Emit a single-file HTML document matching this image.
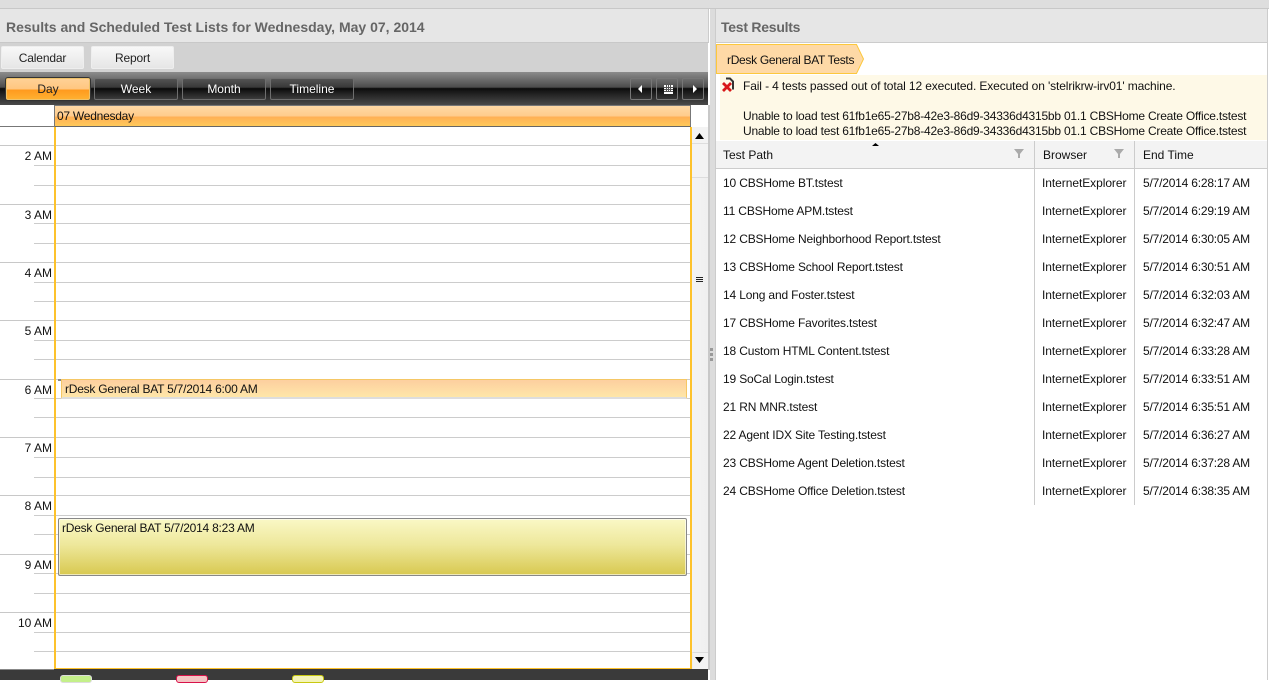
<!DOCTYPE html>
<html>
<head>
<meta charset="utf-8">
<style>
html,body{margin:0;padding:0;background:#fff;}
body{width:1269px;height:680px;overflow:hidden;position:relative;font-family:"Liberation Sans",sans-serif;font-size:12px;color:#111;}
div,span{position:absolute;box-sizing:border-box;white-space:nowrap;}
.t{line-height:14px;}
.title{font-size:14px;font-weight:bold;color:#666;line-height:18px;}
.btn{top:46px;height:23px;width:83px;background:linear-gradient(#f8f8f8,#e6e6e6);border:1px solid #eee;border-radius:2px;text-align:center;line-height:22px;color:#222;letter-spacing:-.15px;}
.vb{top:78px;height:22px;width:84px;border:1px solid #6e6e6e;border-radius:2px;background:linear-gradient(rgba(0,0,0,.25) 0,rgba(0,0,0,.25) 45%,rgba(0,0,0,0) 60%,rgba(255,255,255,.04) 100%);color:#fff;text-align:center;line-height:20px;}
.nb{top:78px;height:22px;width:22px;border:1px solid #777;border-radius:2px;}
.maj{left:0;width:55px;height:1px;background:#c8c8c8;}
.ln{left:56px;width:634px;height:1px;background:#ccc;}
.min{left:34px;width:21px;height:1px;background:#ccc;}
.hr{right:1217px;line-height:14px;color:#111;}
.row{left:723px;line-height:14px;letter-spacing:-.16px;}
.b{left:1042px;line-height:14px;letter-spacing:-.06px;}
.e{left:1143px;line-height:14px;letter-spacing:-.2px;}
</style>
</head>
<body>
<!-- top strip -->
<div style="left:0;top:0;width:1269px;height:9px;background:#dedede;border-bottom:1px solid #c8c8c8"></div>

<!-- left panel title -->
<div style="left:0;top:9px;width:709px;height:34px;background:#e6e6e6;border-bottom:1px solid #c8c8c8;border-right:1px solid #ccc"></div>
<div class="title" style="left:6px;top:18px">Results and Scheduled Test Lists for Wednesday, May 07, 2014</div>

<!-- tab strip -->
<div style="left:0;top:43px;width:708px;height:30px;background:#d2d2d2"></div>
<div class="btn" style="left:1px">Calendar</div>
<div class="btn" style="left:91px">Report</div>

<!-- toolbar -->
<div style="left:0;top:72px;width:708px;height:33px;background:linear-gradient(#8c8c8c 0,#4c4c4c 46%,#0c0c0c 50%,#1a1a1a 60%,#4a4a4a 100%)"></div>
<div class="vb" style="left:6px;background:linear-gradient(#ffd195 0,#ffc680 50%,#ff9a1e 55%,#ffb030 100%);border-color:#eec26a;color:#222;box-shadow:0 0 0 1px #333">Day</div>
<div class="vb" style="left:94px">Week</div>
<div class="vb" style="left:182px">Month</div>
<div class="vb" style="left:270px">Timeline</div>
<div class="nb" style="left:630px"></div>
<div class="nb" style="left:656px"></div>
<div class="nb" style="left:682px"></div>
<svg style="position:absolute;left:630px;top:78px" width="74" height="22">
<path d="M8 11l4-4v8z" fill="#fff"/>
<path d="M34 7h9v9h-9z" fill="#fff"/>
<path d="M34 9.500h9M34 11.500h9M34 13.500h9M36.500 7v7M38.500 7v7M40.500 7v7" stroke="#555" stroke-width="1" fill="none"/>
<path d="M63 7l4 4-4 4z" fill="#fff"/>
</svg>

<!-- calendar grid -->
<div style="left:0;top:105px;width:708px;height:564px;background:#fff"></div>
<div style="left:54px;top:105px;width:637px;height:22px;background:linear-gradient(#ffd9a5 0,#ffcc8c 50%,#ffb055 55%,#ffc95a 100%);border-top:1px solid #777;border-left:1px solid #777;border-right:1px solid #777;border-bottom:1px solid #666"></div>
<div class="t" style="left:57px;top:109px;letter-spacing:-.25px">07 Wednesday</div>
<div style="left:0;top:126px;width:55px;height:1px;background:#777"></div>

<div class="maj" style="top:145px"></div><div class="ln" style="top:145px"></div>
<div class="min" style="top:165px"></div><div class="ln" style="top:165px"></div>
<div class="min" style="top:185px"></div><div class="ln" style="top:185px"></div>
<div class="maj" style="top:204px"></div><div class="ln" style="top:204px"></div>
<div class="min" style="top:223px"></div><div class="ln" style="top:223px"></div>
<div class="min" style="top:243px"></div><div class="ln" style="top:243px"></div>
<div class="maj" style="top:262px"></div><div class="ln" style="top:262px"></div>
<div class="min" style="top:282px"></div><div class="ln" style="top:282px"></div>
<div class="min" style="top:301px"></div><div class="ln" style="top:301px"></div>
<div class="maj" style="top:320px"></div><div class="ln" style="top:320px"></div>
<div class="min" style="top:340px"></div><div class="ln" style="top:340px"></div>
<div class="min" style="top:359px"></div><div class="ln" style="top:359px"></div>
<div class="maj" style="top:379px"></div><div class="ln" style="top:379px"></div>
<div class="min" style="top:398px"></div><div class="ln" style="top:398px"></div>
<div class="min" style="top:417px"></div><div class="ln" style="top:417px"></div>
<div class="maj" style="top:437px"></div><div class="ln" style="top:437px"></div>
<div class="min" style="top:457px"></div><div class="ln" style="top:457px"></div>
<div class="min" style="top:477px"></div><div class="ln" style="top:477px"></div>
<div class="maj" style="top:495px"></div><div class="ln" style="top:495px"></div>
<div class="min" style="top:515px"></div><div class="ln" style="top:515px"></div>
<div class="min" style="top:534px"></div><div class="ln" style="top:534px"></div>
<div class="maj" style="top:554px"></div><div class="ln" style="top:554px"></div>
<div class="min" style="top:573px"></div><div class="ln" style="top:573px"></div>
<div class="min" style="top:593px"></div><div class="ln" style="top:593px"></div>
<div class="maj" style="top:612px"></div><div class="ln" style="top:612px"></div>
<div class="min" style="top:632px"></div><div class="ln" style="top:632px"></div>
<div class="min" style="top:651px"></div><div class="ln" style="top:651px"></div>

<div class="hr" style="top:149px">2 AM</div>
<div class="hr" style="top:208px">3 AM</div>
<div class="hr" style="top:266px">4 AM</div>
<div class="hr" style="top:324px">5 AM</div>
<div class="hr" style="top:383px">6 AM</div>
<div class="hr" style="top:441px">7 AM</div>
<div class="hr" style="top:499px">8 AM</div>
<div class="hr" style="top:558px">9 AM</div>
<div class="hr" style="top:616px">10 AM</div>

<!-- yellow frame -->
<div style="left:54px;top:127px;width:2px;height:542px;background:#fdc22c"></div>
<div style="left:690px;top:127px;width:2px;height:542px;background:#fdc22c"></div>
<div style="left:54px;top:668px;width:638px;height:2px;background:#fdc22c"></div>

<!-- events -->
<div style="left:58px;top:379px;width:3px;height:2px;background:#888"></div>
<div style="left:61px;top:379px;width:626px;height:20px;background:linear-gradient(#fdcf9f,#fee6a8);border:1px solid #f5c765;border-bottom:2px solid #ddd"></div>
<div class="t" style="left:65px;top:382px;letter-spacing:-.23px">rDesk General BAT 5/7/2014 6:00 AM</div>
<div style="left:58px;top:518px;width:629px;height:58px;background:linear-gradient(#faf8c6 0,#eee89c 45%,#d8c950 100%);border:1px solid #888;border-radius:2px;box-shadow:inset 0 0 0 1px rgba(255,255,255,.6)"></div>
<div class="t" style="left:62px;top:521px;letter-spacing:-.23px">rDesk General BAT 5/7/2014 8:23 AM</div>

<!-- scrollbar -->
<div style="left:692px;top:127px;width:16px;height:542px;background:linear-gradient(90deg,#f3f3f3,#f0f0f0)"></div>
<div style="left:692px;top:127px;width:16px;height:17px;border-bottom:1px solid #ddd;background:#f3f3f3"></div>
<div style="left:692px;top:144px;width:16px;height:34px;border-bottom:1px solid #ddd;background:#f3f3f3"></div>
<div style="left:692px;top:652px;width:16px;height:17px;border-top:1px solid #ddd;border-left:1px solid #eee;background:#f3f3f3"></div>
<svg style="position:absolute;left:692px;top:127px" width="16" height="542">
<path d="M3 12l4.500-6 4.500 6z" fill="#000"/>
<path d="M4 150.500h7M4 152.500h7M4 154.500h7" stroke="#222" stroke-width="1" fill="none"/>
<path d="M3 530h9l-4.500 6z" fill="#000"/>
</svg>
<div style="left:708px;top:105px;width:2px;height:565px;background:#c8c8c8"></div>

<!-- footer -->
<div style="left:0;top:669px;width:708px;height:11px;background:#3a3a3a"></div>
<div style="left:0;top:669px;width:54px;height:1px;background:#888"></div>
<div style="left:60px;top:675px;width:32px;height:8px;background:#c4f08a;border:1px solid #ddd;border-radius:3px"></div>
<div style="left:176px;top:675px;width:32px;height:8px;background:#f4c4c4;border:1px solid #d8124a;border-radius:3px"></div>
<div style="left:292px;top:675px;width:32px;height:8px;background:#f4f4b8;border:1px solid #c8c810;border-radius:3px"></div>

<!-- splitter -->
<div style="left:710px;top:9px;width:5px;height:671px;background:#dcdcdc"></div>
<div style="left:710px;top:348px;width:3px;height:3px;background:#999"></div>
<div style="left:710px;top:353px;width:3px;height:3px;background:#999"></div>
<div style="left:710px;top:358px;width:3px;height:3px;background:#999"></div>

<!-- right panel -->
<div style="left:715px;top:9px;width:553px;height:671px;background:#fff;border-left:1px solid #ccc;border-right:1px solid #ccc"></div>
<div style="left:715px;top:9px;width:553px;height:34px;background:#e6e6e6;border:1px solid #ccc;border-top:none"></div>
<div class="title" style="left:721px;top:18px;letter-spacing:-.25px">Test Results</div>

<svg style="position:absolute;left:716px;top:44px" width="150" height="31">
<path d="M.5.500H140.500L147.500 15 140.500 29.500H.5z" fill="#fed9a6" stroke="#fcc83c" stroke-width="1"/>
</svg>
<div class="t" style="left:727px;top:53px;letter-spacing:-.3px">rDesk General BAT Tests</div>

<div style="left:720px;top:75px;width:547px;height:65px;background:#fef9e7"></div>
<svg style="position:absolute;left:721px;top:77px" width="16" height="16">
<path d="M5 1.500h4l3 3v8" fill="none" stroke="#333" stroke-width="2"/>
<path d="M2 6l8 8M10 6l-8 8" stroke="#d81818" stroke-width="2.800" fill="none"/>
</svg>
<div class="t" style="left:743px;top:79px;letter-spacing:-.12px">Fail - 4 tests passed out of total 12 executed. Executed on 'stelrikrw-irv01' machine.</div>
<div class="t" style="left:743px;top:109px;letter-spacing:-.21px">Unable to load test 61fb1e65-27b8-42e3-86d9-34336d4315bb 01.1 CBSHome Create Office.tstest</div>
<div class="t" style="left:743px;top:124px;letter-spacing:-.21px">Unable to load test 61fb1e65-27b8-42e3-86d9-34336d4315bb 01.1 CBSHome Create Office.tstest</div>

<!-- grid header -->
<div style="left:716px;top:141px;width:551px;height:28px;background:#f3f3f3;border-bottom:1px solid #ccc"></div>
<svg style="position:absolute;left:716px;top:141px" width="551" height="28">
<path d="M156 5l3.500-3 3.500 3z" fill="#000"/>
<path d="M298 8h10l-4 5v4h-2v-4z" fill="#aaa"/>
<path d="M398 8h10l-4 5v4h-2v-4z" fill="#aaa"/>
</svg>
<div class="t" style="left:723px;top:148px">Test Path</div>
<div class="t" style="left:1043px;top:148px">Browser</div>
<div class="t" style="left:1143px;top:148px">End Time</div>
<div style="left:1034px;top:141px;width:1px;height:364px;background:#ccc"></div>
<div style="left:1134px;top:141px;width:1px;height:364px;background:#ccc"></div>

<div class="row" style="top:176px">10 CBSHome BT.tstest</div><div class="b" style="top:176px">InternetExplorer</div><div class="e" style="top:176px">5/7/2014 6:28:17 AM</div>
<div class="row" style="top:204px">11 CBSHome APM.tstest</div><div class="b" style="top:204px">InternetExplorer</div><div class="e" style="top:204px">5/7/2014 6:29:19 AM</div>
<div class="row" style="top:232px">12 CBSHome Neighborhood Report.tstest</div><div class="b" style="top:232px">InternetExplorer</div><div class="e" style="top:232px">5/7/2014 6:30:05 AM</div>
<div class="row" style="top:260px">13 CBSHome School Report.tstest</div><div class="b" style="top:260px">InternetExplorer</div><div class="e" style="top:260px">5/7/2014 6:30:51 AM</div>
<div class="row" style="top:288px">14 Long and Foster.tstest</div><div class="b" style="top:288px">InternetExplorer</div><div class="e" style="top:288px">5/7/2014 6:32:03 AM</div>
<div class="row" style="top:316px">17 CBSHome Favorites.tstest</div><div class="b" style="top:316px">InternetExplorer</div><div class="e" style="top:316px">5/7/2014 6:32:47 AM</div>
<div class="row" style="top:344px">18 Custom HTML Content.tstest</div><div class="b" style="top:344px">InternetExplorer</div><div class="e" style="top:344px">5/7/2014 6:33:28 AM</div>
<div class="row" style="top:372px">19 SoCal Login.tstest</div><div class="b" style="top:372px">InternetExplorer</div><div class="e" style="top:372px">5/7/2014 6:33:51 AM</div>
<div class="row" style="top:400px">21 RN MNR.tstest</div><div class="b" style="top:400px">InternetExplorer</div><div class="e" style="top:400px">5/7/2014 6:35:51 AM</div>
<div class="row" style="top:428px">22 Agent IDX Site Testing.tstest</div><div class="b" style="top:428px">InternetExplorer</div><div class="e" style="top:428px">5/7/2014 6:36:27 AM</div>
<div class="row" style="top:456px">23 CBSHome Agent Deletion.tstest</div><div class="b" style="top:456px">InternetExplorer</div><div class="e" style="top:456px">5/7/2014 6:37:28 AM</div>
<div class="row" style="top:484px">24 CBSHome Office Deletion.tstest</div><div class="b" style="top:484px">InternetExplorer</div><div class="e" style="top:484px">5/7/2014 6:38:35 AM</div>
</body>
</html>
